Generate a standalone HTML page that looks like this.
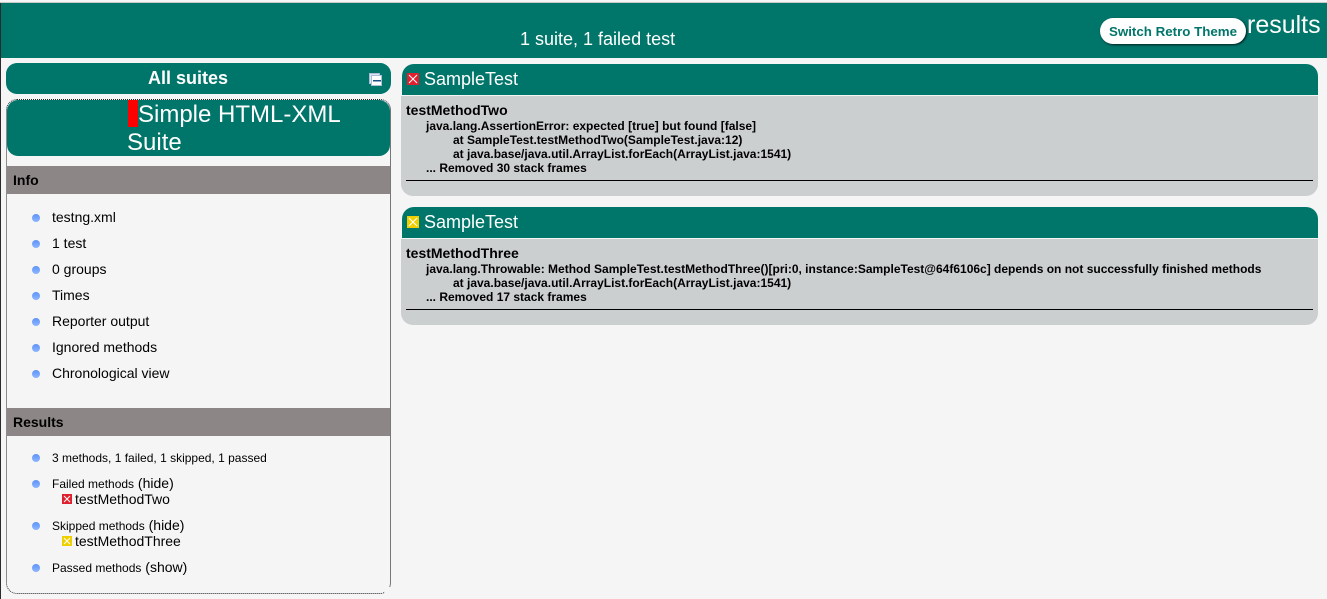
<!DOCTYPE html>
<html><head><meta charset="utf-8"><style>
html,body{margin:0;padding:0;width:1327px;height:599px;overflow:hidden;background:#f5f5f5;font-family:"Liberation Sans",sans-serif;color:#000}
div,span,svg{position:absolute;white-space:nowrap}
span.i{position:static}
.t{background:#00756a}
.gh{background:#8c8786;left:7px;width:383px;height:28px;font-weight:bold;font-size:14px;line-height:28px;text-indent:6px}
.b{width:8px;height:8px;left:32px;border-radius:50%;background:linear-gradient(#5f93f7,#8db6ff)}
.l{left:52px;font-size:14px;line-height:18px}
.s{font-size:12px}
.c{left:401px;width:917px;background:#cccfd0}
.h{left:402px;width:916px;height:31px;background:#00756a;border-radius:12px 12px 0 0;color:#fff;font-size:18px;line-height:31px}
.m{left:406px;font-weight:bold;font-size:14px;line-height:16px}
.x{font-weight:bold;font-size:12px;line-height:14px}
</style></head><body>
<div style="left:0;top:2px;width:1327px;height:1px;background:#c9c9c9"></div>
<div style="left:0;top:3px;width:1327px;height:55px;background:#00756a"></div>
<div style="left:0;top:3px;width:1px;height:596px;background:#2b2b2b"></div>
<div style="left:520px;top:28px;color:#fff;font-size:18px;line-height:22px">1 suite, 1 failed test</div>
<div style="left:1247px;top:9px;color:#fff;font-size:25px;line-height:32px">results</div>
<div style="left:1100px;top:18px;width:146px;height:26px;background:#fff;border-radius:13px;box-shadow:1px 1px 2px #00201d;color:#00756a;font-weight:bold;font-size:13.33px;line-height:27px;text-align:center">Switch Retro Theme</div>

<div class="t" style="left:6px;top:63px;width:385px;height:31px;border-radius:11px"></div>
<div style="left:148px;top:67px;color:#fff;font-weight:bold;font-size:18px;line-height:22px">All suites</div>
<svg style="left:369px;top:73px" width="13" height="13" viewBox="0 0 13 13"><rect x=".5" y=".5" width="10" height="10" fill="#dfe6f0" stroke="#a9bdd6"/><rect x="2.5" y="2.5" width="10" height="10" fill="#fff" stroke="#a9bdd6"/><rect x="4" y="7" width="8" height="1.5" fill="#1c4f86"/></svg>

<div style="left:6px;top:99px;width:383px;height:493px;border:1px dotted #222;border-right:1px solid #777;border-radius:11px"></div>
<div style="left:385px;top:587px;width:7px;height:7px;background:#f5f5f5"></div>
<div class="t" style="left:7px;top:100px;width:383px;height:56px;border-radius:11px"></div>
<div style="left:128px;top:100px;width:10px;height:27px;background:#f00"></div>
<div style="left:138px;top:101px;color:#fff;font-size:24px;line-height:28px">Simple HTML-XML</div>
<div style="left:127px;top:129px;color:#fff;font-size:24px;line-height:28px">Suite</div>

<div class="gh" style="top:166px">Info</div>
<div class="b" style="top:214px"></div><div class="l" style="top:208px">testng.xml</div>
<div class="b" style="top:240px"></div><div class="l" style="top:234px">1 test</div>
<div class="b" style="top:266px"></div><div class="l" style="top:260px">0 groups</div>
<div class="b" style="top:292px"></div><div class="l" style="top:286px">Times</div>
<div class="b" style="top:318px"></div><div class="l" style="top:312px">Reporter output</div>
<div class="b" style="top:344px"></div><div class="l" style="top:338px">Ignored methods</div>
<div class="b" style="top:370px"></div><div class="l" style="top:364px">Chronological view</div>

<div class="gh" style="top:408px">Results</div>
<div class="b" style="top:454px"></div><div class="l s" style="top:449px">3 methods, 1 failed, 1 skipped, 1 passed</div>
<div class="b" style="top:480px"></div><div class="l" style="top:474px"><span class="i s">Failed methods</span> (hide)</div>
<svg style="left:62px;top:494px" width="10" height="10" viewBox="0 0 10 10"><rect width="10" height="10" fill="#e0202e"/><path d="M2 2l6 6M8 2l-6 6" stroke="#fff" stroke-width="1"/></svg>
<div class="l" style="left:75px;top:490px">testMethodTwo</div>
<div class="b" style="top:522px"></div><div class="l" style="top:516px"><span class="i s">Skipped methods</span> (hide)</div>
<svg style="left:62px;top:536px" width="10" height="10" viewBox="0 0 10 10"><rect width="10" height="10" fill="#f0cf00"/><path d="M2 2l6 6M8 2l-6 6" stroke="#fff" stroke-width="1"/></svg>
<div class="l" style="left:75px;top:532px">testMethodThree</div>
<div class="b" style="top:564px"></div><div class="l" style="top:558px"><span class="i s">Passed methods</span> (show)</div>

<div class="c" style="top:96px;height:100px;border-radius:0 0 12px 12px"></div>
<div class="h" style="top:64px"></div>
<svg style="left:407px;top:73px" width="12" height="12" viewBox="0 0 12 12"><rect width="12" height="12" fill="#e0202e"/><path d="M2 2l8 8M10 2l-8 8" stroke="#fff" stroke-width="1"/></svg>
<div style="left:424px;top:68px;color:#fff;font-size:18px;line-height:22px">SampleTest</div>
<div class="m" style="top:102px">testMethodTwo</div>
<div class="x" style="left:426px;top:119px">java.lang.AssertionError: expected [true] but found [false]</div>
<div class="x" style="left:453px;top:133px">at SampleTest.testMethodTwo(SampleTest.java:12)</div>
<div class="x" style="left:453px;top:147px">at java.base/java.util.ArrayList.forEach(ArrayList.java:1541)</div>
<div class="x" style="left:426px;top:161px">... Removed 30 stack frames</div>
<div style="left:406px;top:180px;width:907px;height:1px;background:#000"></div>

<div class="c" style="top:239px;height:86px;border-radius:0 0 12px 12px"></div>
<div class="h" style="top:207px"></div>
<svg style="left:407px;top:216px" width="12" height="12" viewBox="0 0 12 12"><rect width="12" height="12" fill="#f0cf00"/><path d="M2 2l8 8M10 2l-8 8" stroke="#fff" stroke-width="1"/></svg>
<div style="left:424px;top:211px;color:#fff;font-size:18px;line-height:22px">SampleTest</div>
<div class="m" style="top:245px">testMethodThree</div>
<div class="x" style="left:426px;top:262px">java.lang.Throwable: Method SampleTest.testMethodThree()[pri:0, instance:SampleTest@64f6106c] depends on not successfully finished methods</div>
<div class="x" style="left:453px;top:276px">at java.base/java.util.ArrayList.forEach(ArrayList.java:1541)</div>
<div class="x" style="left:426px;top:290px">... Removed 17 stack frames</div>
<div style="left:406px;top:309px;width:907px;height:1px;background:#000"></div>
</body></html>
